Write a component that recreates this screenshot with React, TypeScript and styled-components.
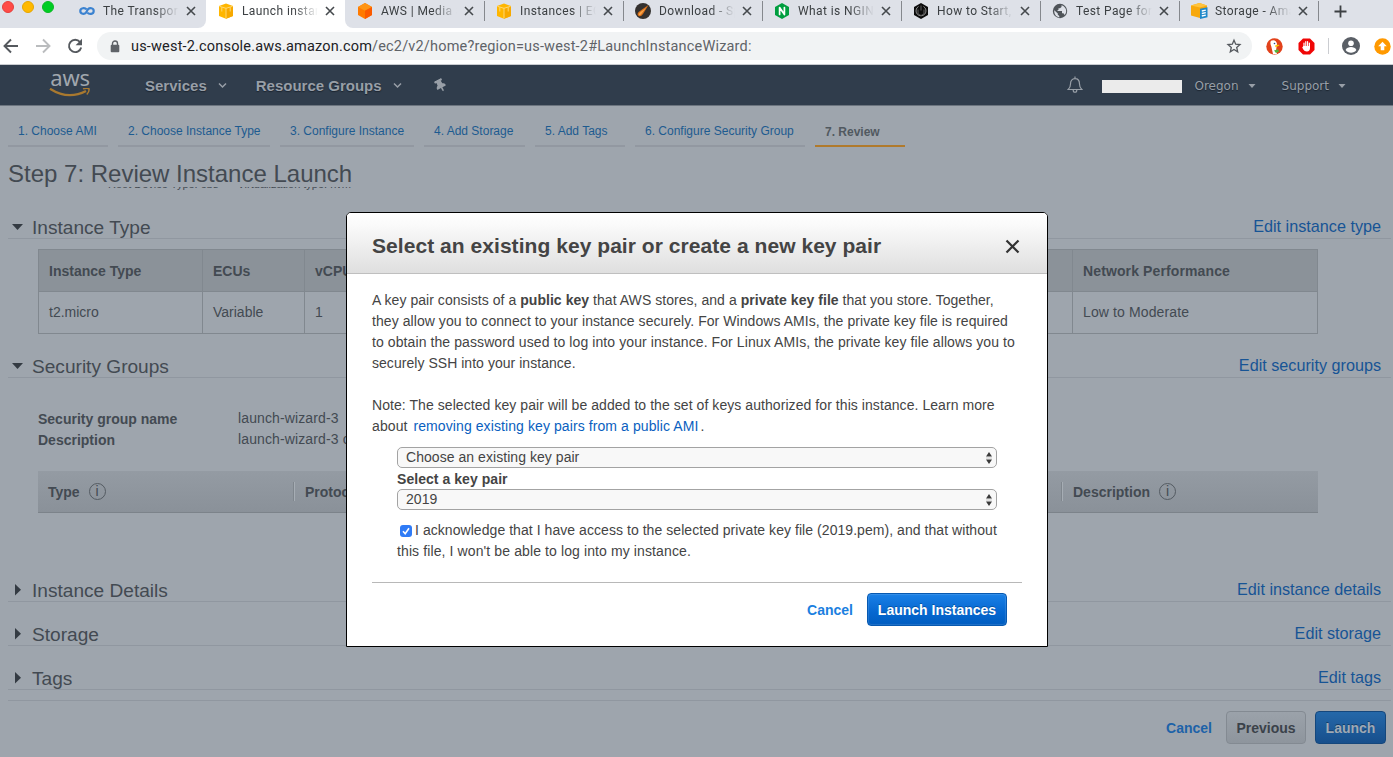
import React from "react";
import styled, { createGlobalStyle, css } from "styled-components";
import { FaThumbtack } from "react-icons/fa";

const Global = createGlobalStyle`
  * { box-sizing: border-box; }
  html, body { margin: 0; padding: 0; overflow: hidden; }
  body {
    width: 1393px; height: 757px; background: #9ea5ad;
    font-family: "Liberation Sans", Arial, sans-serif;
    font-size: 14px; line-height: 21px; color: #434a52;
  }
  svg { display: block; flex: none; }
`;

const Page = styled.div`
  width: 1393px; height: 757px; overflow: hidden;
  display: flex; flex-direction: column;
`;

/* ---------- browser chrome ---------- */
const TabStrip = styled.div`
  height: 28px; flex: none; display: flex; background: #fff;
`;
const WindowControls = styled.div`
  width: 67px; height: 28px; padding: 1px 0 0 2px; display: flex; gap: 8px; background: #dee1e8;
`;
const Dot = styled.span<{ $c: string; $b: string }>`
  width: 12px; height: 12px; border-radius: 50%;
  background: ${(p) => p.$c}; border: 1px solid ${(p) => p.$b};
`;
const separator = css`
  background: linear-gradient(#85888d, #85888d) left 0 top 1px / 1px 20px no-repeat #dee1e8;
`;
const BrowserTab = styled.div<{ $active?: boolean; $sep?: boolean; $round?: string }>`
  width: 139px; height: 28px; display: flex; align-items: flex-start; padding-left: 12px;
  background: ${(p) => (p.$active ? "#fff" : "#dee1e8")};
  border-radius: ${(p) => p.$round || "0"};
  ${(p) => p.$sep && separator}
`;
const Favicon = styled.span`width: 16px; height: 16px; margin-top: 3px; flex: none;`;
const TabTitle = styled.span`
  width: 76px; margin-left: 8px; height: 22px; overflow: hidden; white-space: nowrap;
  font: 12px/22px Roboto, sans-serif; letter-spacing: 0.4px; color: #3c4043;
  -webkit-mask-image: linear-gradient(90deg, #000 68%, transparent 100%);
  mask-image: linear-gradient(90deg, #000 68%, transparent 100%);
`;
const TabClose = styled.span`margin: 6px 0 0 7px;`;
const NewTab = styled.div`
  flex: 1; height: 28px; padding: 5px 0 0 16px; ${separator}
`;
const Toolbar = styled.div`
  height: 37px; flex: none; background: #fff; border-bottom: 1px solid #c9ccd0;
  display: flex; align-items: center; padding-left: 3px;
`;
const NavIcon = styled.span`width: 32px; height: 16px;`;
const UrlBar = styled.div`
  width: 1155px; height: 28px; border-radius: 14px; background: #f1f3f4; margin-left: -2px;
  display: flex; align-items: center; padding: 0 10px 0 13px;
`;
const UrlText = styled.span`
  flex: 1; margin-left: 11px; font: 14.5px/28px Roboto, sans-serif; letter-spacing: 0.18px; color: #5f6368;
  white-space: nowrap; padding-top: 1px;
  b { font-weight: 400; color: #202124; }
`;
const Extensions = styled.div`
  display: flex; align-items: center; margin-left: 14px;
  i { width: 1px; height: 16px; background: #cbcdd1; margin: 0 13px 0 13px; }
`;

/* ---------- console navigation ---------- */
const ConsoleNav = styled.div`
  height: 41px; flex: none; background: #303d4c; border-bottom: 1px solid #6c757f;
  display: flex; align-items: center; color: #989fa7;
`;
const Logo = styled.div`
  width: 42px; margin-left: 49px; height: 40px; padding-top: 2px;
  display: flex; flex-direction: column; align-items: center;
`;
const LogoText = styled.span`
  font: 400 22px/20px "Noto Sans", sans-serif; letter-spacing: -0.3px; color: #a0a7ae;
`;
const LogoSmile = styled.svg`margin-top: 1px;`;
const NavItem = styled.span<{ $ml: number; $gap: number; $small?: boolean }>`
  display: flex; align-items: center; gap: ${(p) => p.$gap}px; margin-left: ${(p) => p.$ml}px; padding-top: 1px;
  font: ${(p) => (p.$small ? '12px/20px "DejaVu Sans", sans-serif' : 'bold 15px/20px "Liberation Sans", sans-serif')};
  white-space: nowrap; text-shadow: 0 1px 1px #1c2530;
`;
const Pin = styled.span`margin-left: 32px; transform: rotate(-28deg); color: #989fa7;`;
const NavSpace = styled.span`flex: 1;`;
const AccountMask = styled.span`width: 80px; height: 13px; background: #ebebeb; margin: 3px 0 0 19px;`;

/* ---------- wizard ---------- */
const Wizard = styled.main`flex: 1; padding: 0 2px 0 8px;`;
const Steps = styled.div`display: flex; gap: 10px; height: 41px; padding-top: 11px;`;
const Step = styled.span<{ $w: number; $current?: boolean }>`
  width: ${(p) => p.$w}px; height: 30px; padding-left: 10px; white-space: nowrap;
  font-size: 12px; line-height: ${(p) => (p.$current ? 31 : 29)}px;
  font-weight: ${(p) => (p.$current ? "bold" : "normal")};
  color: ${(p) => (p.$current ? "#515960" : "#1d5b90")};
  border-bottom: 2px solid ${(p) => (p.$current ? "#b07a2c" : "#9298a1")};
`;
const PageTitle = styled.h1`
  margin: 12px 0 0; height: 28px; font-size: 24px; line-height: 30px; font-weight: 400; color: #434a52;
`;
const Scrolled = styled.div`
  height: 4px; margin-left: 100px; overflow: hidden; display: flex; align-items: flex-end; gap: 19px;
  font-size: 11px; line-height: 14px;
  span { display: block; height: 14px; }
`;
const SectionHead = styled.div<{ $mt: number }>`
  margin-top: ${(p) => p.$mt}px; height: 26px; border-bottom: 1px solid #9097a0;
  display: flex; align-items: center; padding: 3px 10px 0 3px;
`;
const Arrow = styled.span`width: 21px; height: 12px; display: block;`;
const SectionTitle = styled.h2`
  margin: 0; padding-top: 2px; flex: 1; font-size: 19.1px; font-weight: 400; line-height: 24px;
`;
const EditLink = styled.a`font-size: 16.2px; line-height: 24px; margin-top: -2px; color: #175495;`;
const TypeTable = styled.div`
  width: 1280px; height: 85px; margin: 10px 0 0 30px; border: 1px solid #81888f;
  display: grid; grid-template-columns: 164px 102px 384px 384px 1fr; grid-template-rows: 42px 41px;
`;
const Cell = styled.div<{ $head?: boolean; $last?: boolean }>`
  padding-left: 10px; line-height: 43px; letter-spacing: ${(p) => (p.$last ? 0.12 : 0)}px;
  border-right: ${(p) => (p.$last ? "none" : "1px solid #81888f")};
  ${(p) =>
    p.$head
      ? css`background: #8b9299; font-weight: bold; border-bottom: 1px solid #81888f;`
      : css`line-height: 41px;`}
`;
const Details = styled.dl`
  margin: 31px 0 0 30px; display: grid; grid-template-columns: 200px 1fr; grid-auto-rows: 21px;
  dt { font-weight: bold; }
  dd { margin: 0; letter-spacing: 0.12px; line-height: 19px; }
`;
const RulesHead = styled.div`
  width: 1280px; height: 42px; margin: 20px 0 0 30px; border-bottom: 1px solid #7c838a;
  background: linear-gradient(#949ba3, #8a9199);
  display: grid; grid-template-columns: 257px 384px 384px 1fr; align-items: center;
`;
const RuleCell = styled.div<{ $last?: boolean }>`
  height: 19px; display: flex; align-items: center; gap: 9px; font-weight: bold; padding-left: 10px;
  ${(p) => !p.$last && css`border-right: 1px solid #a6adb4; box-shadow: inset -1px 0 #7f868d;`}
`;
const RuleName = styled.span`padding-top: 2px;`;
const Info = styled.span`
  width: 17px; height: 17px; border: 1px solid #545b62; border-radius: 50%;
  font: 14px/15px "Liberation Sans", sans-serif; text-align: center;
`;
const Footer = styled.div`
  margin-top: 10px; border-top: 1px solid #9097a0; padding: 10px 5px 0 0;
  display: flex; justify-content: flex-end; align-items: center;
`;
const Button = styled.button<{ $kind: "plain" | "dim" | "primary"; $w: number; $ml?: number }>`
  width: ${(p) => p.$w}px; height: 33px; padding: 0; margin: 0 0 0 ${(p) => p.$ml || 0}px; border-radius: 4px;
  font: bold 14px/30px "Liberation Sans", sans-serif; white-space: nowrap;
  ${(p) =>
    p.$kind === "plain"
      ? css`border: 1px solid #838a92; background: linear-gradient(#9ba2aa, #8e959d); color: #3b424a;`
      : p.$kind === "dim"
        ? css`border: 1px solid #15477c; background: linear-gradient(#2568a9, #174f8c); color: #9fa9b4; text-shadow: 0 -1px #143e6c;`
        : css`border: 1px solid #0759b1; background: linear-gradient(#1a80e6, #0567d0 60%, #005dc0); color: #fff; text-shadow: 0 -1px #0453a5; box-shadow: inset 0 0 1px 1px rgba(255,255,255,.13);`}
`;
const Cancel = styled.a<{ $c: string }>`
  font-weight: bold; color: ${(p) => p.$c}; margin-right: 14px; padding-top: 2px;
`;

/* ---------- dialog ---------- */
const Dialog = styled.section`
  position: absolute; left: 346px; top: 212px; width: 702px; height: 435px; z-index: 2;
  border: 1px solid #000; border-radius: 5px 5px 0 0; background: #fff; color: #444;
  display: flex; flex-direction: column;
`;
const DialogHead = styled.header`
  height: 61px; flex: none; border-bottom: 1px solid #bfbfbf; border-radius: 4px 4px 0 0;
  background: linear-gradient(#fff, #fafafa 20%, #dfdfdf);
  display: flex; align-items: center; justify-content: space-between; padding: 6px 27px 0 25px;
  h3 { margin: 0; font-size: 21px; line-height: 26px; letter-spacing: 0.05px; color: #444; white-space: nowrap; }
`;
const DialogBody = styled.div`
  padding: 16px 25px 0; white-space: nowrap;
  p { margin: 0 0 21px; }
  a { color: #0a5fc0; margin: 0 2px; }
`;
const Line = styled.span<{ $track: number }>`
  display: block; letter-spacing: ${(p) => p.$track}px;
`;
const KeyForm = styled.div`
  margin: -11px 25px 0; padding-bottom: 20px;
`;
const Select = styled.div`
  width: 600px; height: 21px; border: 1px solid #a3a3a3; border-radius: 5px; background: #f8f8f8;
  display: flex; align-items: center; justify-content: space-between; padding: 0 3px 0 8px; letter-spacing: 0.05px;
`;
const Label = styled.div`font-weight: bold; height: 21px; line-height: 22px; letter-spacing: 0.05px;`;
const Acknowledge = styled.div`margin-top: 10px;`;
const AckLine = styled.div<{ $track: number }>`
  display: flex; align-items: center; letter-spacing: ${(p) => p.$track}px;
`;
const CheckBox = styled.span`
  width: 12px; height: 12px; border-radius: 3px; background: #2f7bf6; margin: 1px 3px 0 3px;
`;
const DialogFoot = styled.footer`
  margin: 0 25px; border-top: 1px solid #b8b8b8; padding: 10px 15px 0 0;
  display: flex; justify-content: flex-end; align-items: center;
`;

/* ---------- icons ---------- */
const CloseX = ({ s = 10, w = 1.6, c = "#45494d" }) => (
  <svg width={s} height={s} viewBox="0 0 10 10"><path d="M1 1l8 8M9 1l-8 8" stroke={c} strokeWidth={w} fill="none" /></svg>
);
const CloudInf = () => (
  <svg width="16" height="16" viewBox="0 0 16 16"><path d="M8.400 9.600C10 11.500 14.700 11.500 14.700 8S10.500 4.700 9 6.300L7 9.600C5.500 11.500 1.300 11.300 1.300 8S6 4.500 7.600 6.400" fill="none" stroke="#3b82d0" strokeWidth="2.200" /></svg>
);
const Cube = () => (
  <svg width="16" height="16" viewBox="0 0 16 16">
    <path d="M1 3l7-2.500L15 3v10l-7 2.700L1 13z" fill="#ffb600" />
    <path d="M8 5.200L15 3v10l-7 2.700z" fill="#f7a900" />
    <path d="M1.400 3.300L8 5.300l6.600-2M8 5.300v10M3.800 4.300v4.200M12.200 4.300v4.200" stroke="#ffdc80" strokeWidth=".9" fill="none" />
  </svg>
);
const OrangeHex = () => (
  <svg width="16" height="16" viewBox="0 0 16 16">
    <path d="M8 0l7 4v8l-7 4-7-4V4z" fill="#ff7a00" /><path d="M8 0l7 4-7 3.800L1 4z" fill="#ff9413" /><path d="M8 7.800L15 4v8l-7 4z" fill="#fb5a00" />
  </svg>
);
const Comet = () => (
  <svg width="16" height="16" viewBox="0 0 16 16">
    <circle cx="8" cy="8" r="8" fill="#34312f" /><path d="M3.300 12.700c-1.800-2 .3-3.600 2-4.900L13.500 2 8.300 10.500c-1.200 2-3.300 3.800-5 2.200z" fill="#d9701a" /><path d="M4 12c-.8-1.200.4-2.200 1.600-3.100L11 5 7 10c-.8 1.300-2.200 2.800-3 2z" fill="#f9a64a" />
  </svg>
);
const Nginx = () => (
  <svg width="16" height="16" viewBox="0 0 16 16"><path d="M8 0l7 4v8l-7 4-7-4V4z" fill="#009e3f" /><path d="M5.600 11.500v-7l4.800 7v-7" fill="none" stroke="#fff" strokeWidth="1.700" strokeLinejoin="round" strokeLinecap="round" /></svg>
);
const DarkHex = () => (
  <svg width="16" height="16" viewBox="0 0 16 16"><path d="M8 0l7 4v8l-7 4-7-4V4z" fill="#0c0c0c" /><path d="M5.500 3.500A5 5 0 1 0 10.500 3.500" fill="none" stroke="#8c8c8c" strokeWidth="1" /><path d="M8 2.500v5M5 6.500v4.500l3 1.500 3-1.500V6.500" fill="none" stroke="#5f5f5f" strokeWidth="1" /></svg>
);
const Globe = () => (
  <svg width="16" height="16" viewBox="0 0 16 16"><circle cx="8" cy="8" r="7.200" fill="#4f5459" /><path d="M2.300 7.300l3.500 3.200v1.300l1.500 1.300v1.300C4.200 14 1.800 11 2.300 7.300zM9.500 2.300v1.600L8 5.300H6.500v1.500L5 8h5v2.300h1.500l1 1.700c1-1 1.700-2.500 1.700-4 0-2.500-2-5-4.700-5.700z" fill="#dee1e8" /></svg>
);
const StorageIcon = () => (
  <svg width="17" height="16" viewBox="0 0 17 16">
    <path d="M0 2.500L8.500 0 16 2.500V12l-7 3-9-2.500z" fill="#f7a80d" /><path d="M0 2.500L8.500 0 16 2.500 9 4.500z" fill="#ffc33c" />
    <path d="M9 5.800l7.500-1.500v10L9 16z" fill="#1e88c9" /><path d="M10.800 8l4-.8M10.800 10.500l4-.8M10.800 13l4-.8" stroke="#fff" strokeWidth="1.300" />
  </svg>
);
const Chevron = () => (
  <svg width="9" height="9" viewBox="0 0 9 9"><path d="M1 2.500L4.500 6 8 2.500" fill="none" stroke="#989fa7" strokeWidth="1.500" /></svg>
);
const Caret = () => <svg width="8" height="8" viewBox="0 0 8 8"><path d="M.5 2h7L4 6z" fill="#989fa7" /></svg>;
const Stepper = () => (
  <svg width="8" height="14" viewBox="0 0 8 14"><path d="M4 1l3 4.500H1zM4 13l3-4.500H1z" fill="#3a3a3a" /><path d="M1 7h6" stroke="#ccc" /></svg>
);

const tabs: { title: string; icon: React.ReactNode; active?: boolean; sep?: boolean; round?: string }[] = [
  { title: "The Transport", icon: <CloudInf />, round: "0 0 8px 0" },
  { title: "Launch instance", icon: <Cube />, active: true },
  { title: "AWS | Media S", icon: <OrangeHex />, round: "0 0 0 8px" },
  { title: "Instances | EC2", icon: <Cube />, sep: true },
  { title: "Download - Sp", icon: <Comet />, sep: true },
  { title: "What is NGINX", icon: <Nginx />, sep: true },
  { title: "How to Start, S", icon: <DarkHex />, sep: true },
  { title: "Test Page for t", icon: <Globe />, sep: true },
  { title: "Storage - Ama", icon: <StorageIcon />, sep: true },
];

const steps: [string, number][] = [
  ["1. Choose AMI", 100], ["2. Choose Instance Type", 152], ["3. Configure Instance", 134],
  ["4. Add Storage", 101], ["5. Add Tags", 90], ["6. Configure Security Group", 170], ["7. Review", 90],
];

function Section({ title, edit, mt, open }: { title: string; edit: string; mt: number; open?: boolean }) {
  return (
    <SectionHead $mt={mt}>
      <Arrow>
        <svg width="14" height="12" viewBox="0 0 14 12">
          <path d={open ? "M1 3h11l-5.500 6z" : "M4 0l6 5.700-6 5.700z"} fill="#343b43" />
        </svg>
      </Arrow>
      <SectionTitle>{title}</SectionTitle>
      <EditLink>{edit}</EditLink>
    </SectionHead>
  );
}

export default function App() {
  return (
    <>
      <Global />
      <Page>
        <TabStrip>
          <WindowControls>
            <Dot $c="#ff4b47" $b="#e5403d" /><Dot $c="#ffb900" $b="#e6a600" /><Dot $c="#00cd24" $b="#0bb824" />
          </WindowControls>
          {tabs.map((t) => (
            <BrowserTab key={t.title} $active={t.active} $sep={t.sep} $round={t.round}>
              <Favicon>{t.icon}</Favicon>
              <TabTitle>{t.title}</TabTitle>
              <TabClose><CloseX /></TabClose>
            </BrowserTab>
          ))}
          <NewTab><svg width="13" height="13" viewBox="0 0 13 13"><path d="M6.500 .5v12M.5 6.500h12" stroke="#3c4043" strokeWidth="1.800" /></svg></NewTab>
        </TabStrip>
        <Toolbar>
          <NavIcon><svg width="16" height="16" viewBox="0 0 16 16"><path d="M15 8H2M8 1.500L1.500 8 8 14.500" fill="none" stroke="#55595e" strokeWidth="1.900" /></svg></NavIcon>
          <NavIcon><svg width="16" height="16" viewBox="0 0 16 16"><path d="M1 8h13M8 1.500L14.500 8 8 14.500" fill="none" stroke="#babcbe" strokeWidth="1.900" /></svg></NavIcon>
          <NavIcon><svg width="16" height="16" viewBox="0 0 16 16"><path d="M13 4A6.200 6.200 0 1 0 14.200 9.500" fill="none" stroke="#55595e" strokeWidth="1.900" /><path d="M15 .8v6.400H8.600z" fill="#55595e" /></svg></NavIcon>
          <UrlBar>
            <svg width="10" height="13" viewBox="0 0 10 13"><path d="M2.500 5.500V3.500a2.500 2.500 0 0 1 5 0v2" fill="none" stroke="#5f6368" strokeWidth="1.400" /><rect x=".7" y="4.800" width="8.600" height="7.400" rx="1" fill="#5f6368" /></svg>
            <UrlText><b>us-west-2.console.aws.amazon.com</b>/ec2/v2/home?region=us-west-2#LaunchInstanceWizard:</UrlText>
            <svg width="16" height="16" viewBox="0 0 16 16"><path d="M8 2.200l1.700 4 4.300.4-3.300 2.900 1 4.300L8 11.500l-3.700 2.300 1-4.300L2 6.600l4.300-.4z" fill="none" stroke="#55595e" strokeWidth="1.300" /></svg>
          </UrlBar>
          <Extensions>
            <svg width="17" height="17" viewBox="0 0 17 17"><circle cx="8.500" cy="8.500" r="8.200" fill="#e2421b" /><path d="M5 2.800c3-1.600 5.600.2 6 3l-1 7 1 3c-2 .8-3.500.6-4 .3L5.300 8.500C4.300 6 4 4 5 2.800z" fill="#fff" /><path d="M9 7.500c2-1 3-.8 4.500-.5-.5 1.300-2.500 1.500-4 2.200z" fill="#fdc80a" /><path d="M8 12.500l4-1.300 1 2.300-3 1.500z" fill="#52b53a" /><circle cx="8.500" cy="5.500" r=".8" fill="#2d4f8e" /></svg>
            <svg width="17" height="17" viewBox="0 0 17 17" style={{ marginLeft: 15 }}><path d="M5 .5h7L16.500 5v7L12 16.500H5L.5 12V5z" fill="#f00606" /><path d="M6 9.500V5M7.800 8V3.700M9.600 8V3.700M11.400 9V5" stroke="#fff" strokeWidth="1.200" strokeLinecap="round" /><path d="M5.400 8h6.600v2c0 2.200-1 3.400-3.100 3.400-2 0-3.100-1-4.700-4z" fill="#fff" /></svg>
            <i />
            <svg width="18" height="18" viewBox="0 0 18 18"><circle cx="9" cy="9" r="9" fill="#5a5f66" /><circle cx="9" cy="6.300" r="2.800" fill="#fff" /><path d="M3.600 13c1-2.200 3-3 5.400-3s4.400.8 5.400 3c-1.200 1.800-3.200 2.700-5.400 2.700S4.800 14.800 3.600 13z" fill="#fff" /></svg>
            <svg width="17" height="17" viewBox="0 0 17 17" style={{ marginLeft: 14 }}><circle cx="8.500" cy="8.500" r="8.200" fill="#ff9900" /><path d="M8.500 3.800l4.300 4.500h-2.500v4H6.700v-4H4.200z" fill="#fff" /></svg>
          </Extensions>
        </Toolbar>

        <ConsoleNav>
          <Logo>
            <LogoText>aws</LogoText>
            <LogoSmile width="42" height="10" viewBox="0 0 42 10"><path d="M1 .8c11 7 24 8.500 36 2.200" fill="none" stroke="#a9792f" strokeWidth="2.300" /><path d="M34 .9c3-.8 5-.8 6-.1.400 2-.600 4-2.200 5.700" fill="none" stroke="#a9792f" strokeWidth="1.500" /></LogoSmile>
          </Logo>
          <NavItem $ml={54} $gap={11}>Services <Chevron /></NavItem>
          <NavItem $ml={29} $gap={11}>Resource Groups <Chevron /></NavItem>
          <Pin><FaThumbtack size={13} /></Pin>
          <NavSpace />
          <svg width="16" height="18" viewBox="0 0 16 18"><path d="M8 .5v2M1.200 13.500c1.500-1.300 2.300-2.500 2.300-5.500 0-3.500 1.700-5.300 4.500-5.300s4.500 1.800 4.500 5.300c0 3 .8 4.200 2.300 5.500zM6.200 14c0 3 3.600 3 3.600 0" fill="none" stroke="#989fa7" strokeWidth="1.200" /></svg>
          <AccountMask />
          <NavItem $ml={13} $gap={9} $small>Oregon <Caret /></NavItem>
          <NavItem $ml={26} $gap={9} $small style={{ marginRight: 47 }}>Support <Caret /></NavItem>
        </ConsoleNav>

        <Wizard>
          <Steps>
            {steps.map(([label, w], i) => (
              <Step key={label} $w={w} $current={i === 6}>{label}</Step>
            ))}
          </Steps>
          <PageTitle>Step 7: Review Instance Launch</PageTitle>
          <Scrolled><span>Root Device Type: ebs</span><span>Virtualization type: hvm</span></Scrolled>

          <Section title="Instance Type" edit="Edit instance type" mt={22} open />
          <TypeTable>
            <Cell $head>Instance Type</Cell><Cell $head>ECUs</Cell><Cell $head>vCPUs</Cell><Cell $head /><Cell $head $last>Network Performance</Cell>
            <Cell>t2.micro</Cell><Cell>Variable</Cell><Cell>1</Cell><Cell /><Cell $last>Low to Moderate</Cell>
          </TypeTable>

          <Section title="Security Groups" edit="Edit security groups" mt={18} open />
          <Details>
            <dt>Security group name</dt><dd>launch-wizard-3</dd>
            <dt>Description</dt><dd>launch-wizard-3 created</dd>
          </Details>
          <RulesHead>
            <RuleCell><RuleName>Type</RuleName><Info>i</Info></RuleCell>
            <RuleCell><RuleName>Protocol</RuleName></RuleCell>
            <RuleCell />
            <RuleCell $last><RuleName>Description</RuleName><Info>i</Info></RuleCell>
          </RulesHead>

          <Section title="Instance Details" edit="Edit instance details" mt={63} />
          <Section title="Storage" edit="Edit storage" mt={18} />
          <Section title="Tags" edit="Edit tags" mt={18} />
          <Footer>
            <Cancel $c="#1d62a8">Cancel</Cancel>
            <Button $kind="plain" $w={80}>Previous</Button>
            <Button $kind="dim" $w={71} $ml={9}>Launch</Button>
          </Footer>
        </Wizard>
      </Page>

      <Dialog>
        <DialogHead>
          <h3>Select an existing key pair or create a new key pair</h3>
          <CloseX s={15} w={1.5} c="#333" />
        </DialogHead>
        <DialogBody>
          <p>
            <Line $track={0.045}>A key pair consists of a <b>public key</b> that AWS stores, and a <b>private key file</b> that you store. Together,</Line>
            <Line $track={0.065}>they allow you to connect to your instance securely. For Windows AMIs, the private key file is required</Line>
            <Line $track={0.09}>to obtain the password used to log into your instance. For Linux AMIs, the private key file allows you to</Line>
            <Line $track={0.04}>securely SSH into your instance.</Line>
          </p>
          <p>
            <Line $track={0.065}>Note: The selected key pair will be added to the set of keys authorized for this instance. Learn more</Line>
            <Line $track={0.09}>about <a>removing existing key pairs from a public AMI</a>.</Line>
          </p>
          <KeyForm>
            <Select>Choose an existing key pair <Stepper /></Select>
            <Label>Select a key pair</Label>
            <Select>2019 <Stepper /></Select>
            <Acknowledge>
              <AckLine $track={0.055}>
                <CheckBox><svg width="12" height="12" viewBox="0 0 12 12"><path d="M3 6.300l2.200 2.500L9 3.200" fill="none" stroke="#fff" strokeWidth="1.600" /></svg></CheckBox>
                I acknowledge that I have access to the selected private key file (2019.pem), and that without
              </AckLine>
              <AckLine $track={0.11}>this file, I won't be able to log into my instance.</AckLine>
            </Acknowledge>
          </KeyForm>
        </DialogBody>
        <DialogFoot>
          <Cancel $c="#1b7fe0">Cancel</Cancel>
          <Button $kind="primary" $w={140}>Launch Instances</Button>
        </DialogFoot>
      </Dialog>
    </>
  );
}
